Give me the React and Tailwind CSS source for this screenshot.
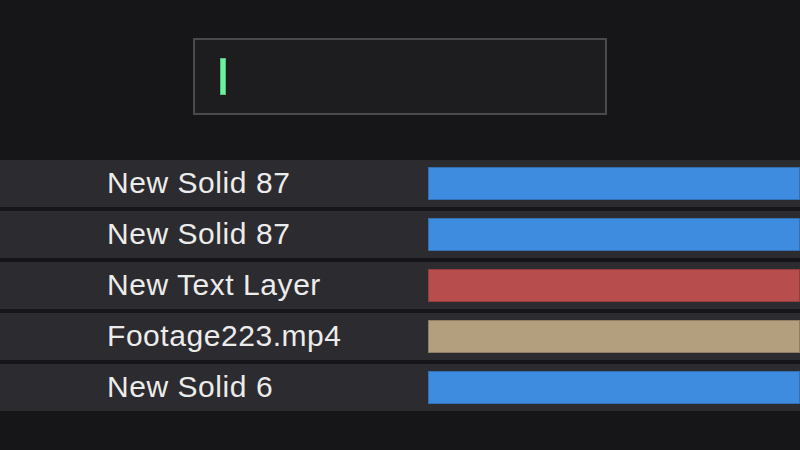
import React from 'react';

const LAYERS = [
  { name: 'New Solid 87',   color: 'bg-[#3d8ce0]' },
  { name: 'New Solid 87',   color: 'bg-[#3d8ce0]' },
  { name: 'New Text Layer', color: 'bg-[#b84d4d]' },
  { name: 'Footage223.mp4', color: 'bg-[#b39e7e]' },
  { name: 'New Solid 6',    color: 'bg-[#3d8ce0]' },
];

export default function App() {
  return (
    <div className="w-[800px] h-[450px] bg-[#161518] overflow-hidden" style={{ fontFamily: '"Liberation Sans", Arial, sans-serif' }}>
      {/* search box */}
      <div className="pt-[38px] pl-[193px]">
        <div className="w-[414px] h-[77px] border-2 border-[#4a494c] bg-[#1d1d1f] flex items-center pl-[25px]">
          <div className="w-[6px] h-[37px] bg-[#6ef0a0] border border-[#4fc07e]" />
        </div>
      </div>

      {/* layer rows */}
      <div className="mt-[45px] flex flex-col gap-[4px]">
        {LAYERS.map((l, i) => (
          <div key={i} className="h-[47px] bg-[#2c2b2f] flex items-center">
            <div className="w-[428px] pl-[107px] text-[30px] tracking-[0.55px] leading-none text-[#ececec] pb-[1px]">{l.name}</div>
            <div className={`flex-1 h-[33px] ${l.color} border border-black/20`} />
          </div>
        ))}
      </div>
    </div>
  );
}
